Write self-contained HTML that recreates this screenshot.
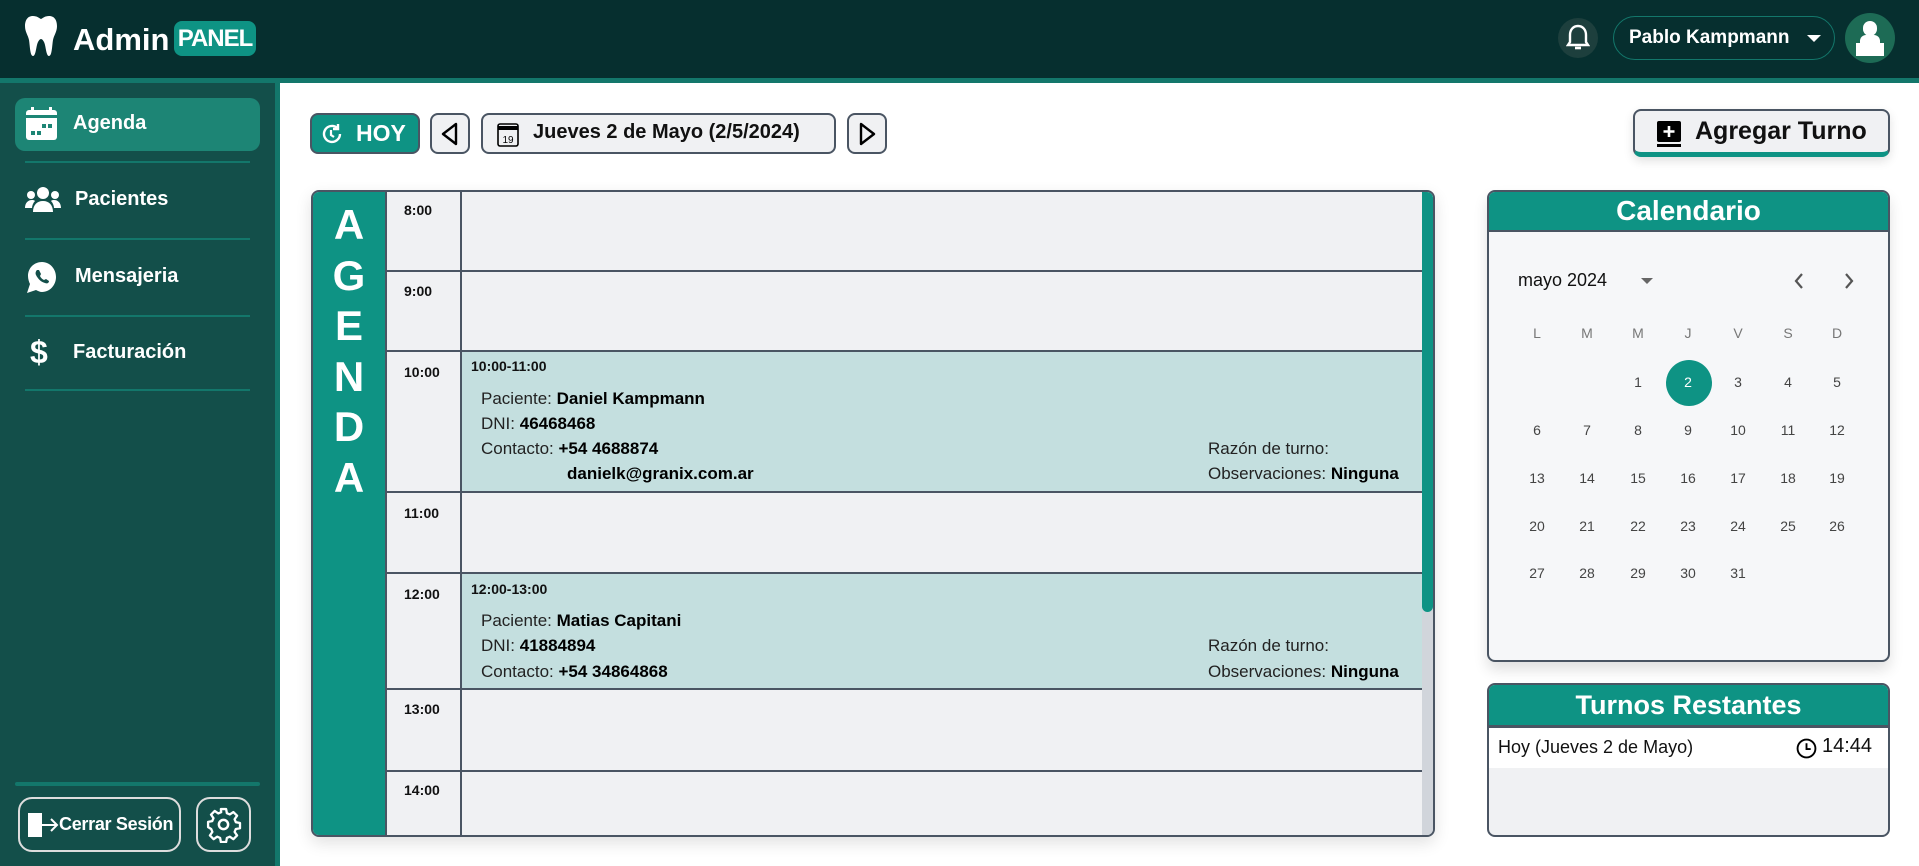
<!DOCTYPE html>
<html><head><meta charset="utf-8"><style>
*{box-sizing:border-box;margin:0;padding:0}
body{width:1919px;height:866px;overflow:hidden;background:#fff;font-family:"Liberation Sans",sans-serif;position:relative;color:#111}
.a{position:absolute}
#hdr{left:0;top:0;width:1919px;background:#062f2f;border-bottom:5px solid #13776b;height:83px}
#side{left:0;top:83px;width:280px;height:783px;background:#134f4a;border-right:5px solid #13776b}
.nav{color:#fff;font-weight:bold;font-size:20px}
.sep{height:2px;background:#13776b;left:25px;width:225px}
.btn{border:2px solid #4a5563;border-radius:8px;background:#f0f1f3}
.tl{font-size:14px;font-weight:bold;left:404px}
.hl{height:2px;background:#4a5563;left:387px;width:1035px}
.tx{font-size:17px;color:#222}
.tx b{color:#000;font-weight:bold}
.day{font-size:14px;color:#444;width:40px;text-align:center}
.dh{font-size:14px;color:#777;width:40px;text-align:center}
</style></head><body>
<div id="hdr" class="a"></div>
<svg class="a" style="left:24px;top:15px" width="34" height="42" viewBox="0 0 34 42"><path d="M9 1C3 1 1 6 1 11c0 6 3 9 4 14 1 6 1 16 4 16s3-10 5-14c1-2 2-3 3-3s2 1 3 3c2 4 2 14 5 14s3-10 4-16c1-5 4-8 4-14 0-5-2-10-8-10-4 0-6 2-8 3-2-1-4-3-8-3z" fill="#fff"/></svg>
<div class="a" style="left:73px;top:22px;color:#fff;font-size:31px;font-weight:bold">Admin</div>
<div class="a" style="left:174px;top:21px;width:82px;height:35px;background:#0e9384;border-radius:8px;color:#fff;font-size:24px;font-weight:bold;text-align:center;line-height:35px;letter-spacing:-1px">PANEL</div>
<div class="a" style="left:1558px;top:18px;width:40px;height:40px;border-radius:50%;background:#1d3f3d"></div>
<svg class="a" style="left:1566px;top:24px" width="24" height="28" viewBox="0 0 24 28"><path d="M12 2c-5 0-8 4-8 9v7l-2 3h20l-2-3v-7c0-5-3-9-8-9z" fill="none" stroke="#fff" stroke-width="2.4"/><path d="M9 24h6" stroke="#fff" stroke-width="2.6"/></svg>
<div class="a" style="left:1613px;top:16px;width:222px;height:44px;border:1.5px solid #13776b;border-radius:22px;color:#fff;font-size:19px;font-weight:bold;line-height:41px;padding-left:15px">Pablo Kampmann</div>
<div class="a" style="left:1807px;top:35px;border-left:7px solid transparent;border-right:7px solid transparent;border-top:7px solid #fff"></div>
<div class="a" style="left:1845px;top:13px;width:50px;height:50px;border-radius:50%;background:#1d6b55;overflow:hidden">
<div class="a" style="left:18px;top:8px;width:14px;height:15px;border-radius:7px;background:#fff"></div>
<div class="a" style="left:15px;top:22px;width:20px;height:10px;background:#fff;border-radius:6px 6px 0 0"></div>
<div class="a" style="left:11px;top:30px;width:28px;height:13px;background:#fff"></div></div>

<div id="side" class="a"></div>
<div class="a" style="left:15px;top:98px;width:245px;height:53px;background:#1d8575;border-radius:10px"></div>
<svg class="a" style="left:25px;top:107px" width="33" height="33" viewBox="0 0 33 33"><rect x="1" y="3" width="31" height="30" rx="3" fill="#fff"/><rect x="6" y="0" width="3" height="6" fill="#fff"/><rect x="24" y="0" width="3" height="6" fill="#fff"/><rect x="1" y="8" width="31" height="3" fill="#1d8575"/><rect x="17" y="17" width="4" height="4" fill="#1d8575"/><rect x="23" y="17" width="4" height="4" fill="#1d8575"/><rect x="6" y="24" width="4" height="4" fill="#1d8575"/><rect x="12" y="24" width="4" height="4" fill="#1d8575"/></svg>
<div class="a nav" style="left:73px;top:112px">Agenda</div>
<div class="a sep" style="top:161px"></div>
<svg class="a" style="left:25px;top:186px" width="36" height="26" viewBox="0 0 36 26"><circle cx="18" cy="7" r="6" fill="#fff"/><circle cx="6" cy="9" r="4" fill="#fff"/><circle cx="30" cy="9" r="4" fill="#fff"/><path d="M8 26c0-7 4-11 10-11s10 4 10 11z M0 22c0-5 3-8 7-8 1 0 2 0 3 1-2 2-3 5-3 7z M36 22c0-5-3-8-7-8-1 0-2 0-3 1 2 2 3 5 3 7z" fill="#fff"/></svg>
<div class="a nav" style="left:75px;top:188px">Pacientes</div>
<div class="a sep" style="top:238px"></div>
<svg class="a" style="left:26px;top:261px" width="32" height="33" viewBox="0 0 32 33"><path d="M16 1C8 1 2 7 2 15c0 3 1 6 2 8L1 32l9-3c2 1 4 2 6 2 8 0 14-7 14-15S24 1 16 1z" fill="#fff"/><path d="M11 9c-1 1-2 3-1 5 2 4 5 7 9 8 2 1 4 0 4-2l-3-2-2 1c-2-1-3-2-4-4l1-2-2-4z" fill="#134f4a"/></svg>
<div class="a nav" style="left:75px;top:265px">Mensajeria</div>
<div class="a sep" style="top:315px"></div>
<div class="a" style="left:30px;top:334px;color:#fff;font-size:32px;font-weight:bold">$</div>
<div class="a nav" style="left:73px;top:341px">Facturación</div>
<div class="a sep" style="top:389px"></div>
<div class="a" style="left:15px;top:782px;width:245px;height:4px;background:#13776b;border-radius:2px"></div>
<div class="a" style="left:18px;top:797px;width:163px;height:55px;border:2px solid #ddd;border-radius:14px"></div>
<div class="a" style="left:28px;top:813px;width:14px;height:24px;background:#fff"></div>
<svg class="a" style="left:38px;top:816px" width="22" height="18" viewBox="0 0 22 18"><path d="M2 9h17M13 3l6 6-6 6" stroke="#fff" stroke-width="2" fill="none"/></svg>
<div class="a" style="left:59px;top:814px;color:#fff;font-size:18px;font-weight:bold;letter-spacing:-0.3px">Cerrar Sesión</div>
<div class="a" style="left:196px;top:797px;width:55px;height:55px;border:2px solid #ddd;border-radius:14px"></div>
<svg class="a" style="left:205px;top:806px" width="37" height="37" viewBox="0 0 24 24"><path d="M10.3 2h3.4l.5 2.7 1.9.8 2.3-1.6 2.4 2.4-1.6 2.3.8 1.9 2.7.5v3.4l-2.7.5-.8 1.9 1.6 2.3-2.4 2.4-2.3-1.6-1.9.8-.5 2.7h-3.4l-.5-2.7-1.900-.8-2.3 1.6-2.4-2.4 1.6-2.3-.8-1.9L2 13.7v-3.4l2.7-.5.8-1.9-1.6-2.3 2.4-2.4 2.3 1.6 1.9-.8z" fill="none" stroke="#fff" stroke-width="1.5" stroke-linejoin="round"/><circle cx="12" cy="12" r="3" fill="none" stroke="#fff" stroke-width="1.6"/></svg>

<div class="a btn" style="left:310px;top:113px;width:110px;height:41px;background:#0e9384"></div>
<svg class="a" style="left:320px;top:122px" width="24" height="24" viewBox="0 0 24 24"><path d="M20 12a8 8 0 1 1-3-6.3" fill="none" stroke="#fff" stroke-width="2.4"/><path d="M18 2v5h-5" fill="none" stroke="#fff" stroke-width="2.4"/><path d="M11 8v5l3 2" stroke="#fff" stroke-width="2.2" fill="none"/></svg>
<div class="a" style="left:356px;top:120px;color:#fff;font-size:23px;font-weight:bold">HOY</div>
<div class="a btn" style="left:430px;top:113px;width:40px;height:41px"></div>
<svg class="a" style="left:439px;top:121px" width="22" height="26" viewBox="0 0 22 26"><path d="M17 3v20L4 13z" fill="none" stroke="#000" stroke-width="2.4" stroke-linejoin="round"/></svg>
<div class="a btn" style="left:481px;top:113px;width:355px;height:41px"></div>
<svg class="a" style="left:497px;top:121px" width="22" height="26" viewBox="0 0 22 26"><rect x="1" y="3" width="20" height="22" rx="2" fill="none" stroke="#000" stroke-width="1.6"/><rect x="1" y="5" width="20" height="4" fill="#000"/><text x="11" y="22" font-size="10" text-anchor="middle" font-family="Liberation Sans">19</text></svg>
<div class="a" style="left:533px;top:121px;font-size:20px;font-weight:bold;color:#111">Jueves 2 de Mayo (2/5/2024)</div>
<div class="a btn" style="left:847px;top:113px;width:40px;height:41px"></div>
<svg class="a" style="left:856px;top:121px" width="22" height="26" viewBox="0 0 22 26"><path d="M5 3v20l13-10z" fill="none" stroke="#000" stroke-width="2.4" stroke-linejoin="round"/></svg>
<div class="a btn" style="left:1633px;top:109px;width:257px;height:48px;border-bottom:5px solid #0e9384;box-shadow:0 4px 10px rgba(0,0,0,.12)"></div>
<svg class="a" style="left:1657px;top:121px" width="24" height="26" viewBox="0 0 24 26"><rect x="0" y="0" width="24" height="21" rx="2" fill="#000"/><rect x="0" y="23" width="24" height="3" fill="#000"/><path d="M12 5v11M6.5 10.5h11" stroke="#fff" stroke-width="2.6"/></svg>
<div class="a" style="left:1695px;top:117px;font-size:25px;font-weight:bold;color:#111">Agregar Turno</div>

<div class="a" style="left:311px;top:190px;width:1124px;height:647px;border:2px solid #4a5563;border-radius:8px;background:#f0f1f3;overflow:hidden;box-shadow:0 6px 16px rgba(0,0,0,.12)">
<div class="a" style="left:0;top:0;width:74px;height:647px;background:#0e9384;border-right:2px solid #4a5563"></div>
<div class="a" style="left:147px;top:0;width:2px;height:647px;background:#4a5563"></div>
<div class="a" style="left:149px;top:159px;width:960px;height:140px;background:#c4dfdf"></div>
<div class="a" style="left:149px;top:381px;width:960px;height:115px;background:#c4dfdf"></div>
<div class="a" style="left:1109px;top:0;width:13px;height:647px;background:#d1d5db"></div>
<div class="a" style="left:1109px;top:0;width:11px;height:420px;background:#0e9384;border-radius:0 0 6px 6px"></div>
</div>
<div class="a" style="left:313px;top:200px;width:72px;text-align:center;color:#fff;font-size:42px;font-weight:bold;line-height:50.5px">A<br>G<br>E<br>N<br>D<br>A</div>
<div class="a hl" style="top:270px"></div><div class="a hl" style="top:350px"></div><div class="a hl" style="top:491px"></div><div class="a hl" style="top:572px"></div><div class="a hl" style="top:688px"></div><div class="a hl" style="top:770px"></div>
<div class="a tl" style="top:202px">8:00</div>
<div class="a tl" style="top:283px">9:00</div>
<div class="a tl" style="top:364px">10:00</div>
<div class="a tl" style="top:505px">11:00</div>
<div class="a tl" style="top:586px">12:00</div>
<div class="a tl" style="top:701px">13:00</div>
<div class="a tl" style="top:782px">14:00</div>
<div class="a" style="left:471px;top:358px;font-size:14px;font-weight:bold">10:00-11:00</div>
<div class="a tx" style="left:481px;top:389px">Paciente: <b>Daniel Kampmann</b></div>
<div class="a tx" style="left:481px;top:414px">DNI: <b>46468468</b></div>
<div class="a tx" style="left:481px;top:439px">Contacto: <b>+54 4688874</b></div>
<div class="a tx" style="left:567px;top:464px"><b>danielk@granix.com.ar</b></div>
<div class="a tx" style="left:1208px;top:439px">Razón de turno:</div>
<div class="a tx" style="left:1208px;top:464px">Observaciones: <b>Ninguna</b></div>
<div class="a" style="left:471px;top:581px;font-size:14px;font-weight:bold">12:00-13:00</div>
<div class="a tx" style="left:481px;top:611px">Paciente: <b>Matias Capitani</b></div>
<div class="a tx" style="left:481px;top:636px">DNI: <b>41884894</b></div>
<div class="a tx" style="left:481px;top:662px">Contacto: <b>+54 34864868</b></div>
<div class="a tx" style="left:1208px;top:636px">Razón de turno:</div>
<div class="a tx" style="left:1208px;top:662px">Observaciones: <b>Ninguna</b></div>

<div class="a" style="left:1487px;top:190px;width:403px;height:472px;border:2px solid #4a5563;border-radius:8px;background:#f6f7f9;overflow:hidden;box-shadow:0 8px 14px rgba(0,0,0,.12)">
<div style="height:40px;background:#0e9384;border-bottom:2px solid #4a5563;color:#fff;font-size:28px;font-weight:bold;text-align:center;line-height:38px">Calendario</div></div>
<div class="a" style="left:1518px;top:270px;font-size:18px;color:#111">mayo 2024</div>
<div class="a" style="left:1641px;top:278px;border-left:6px solid transparent;border-right:6px solid transparent;border-top:6px solid #666"></div>
<svg class="a" style="left:1790px;top:272px" width="70" height="18" viewBox="0 0 70 18"><path d="M12 2l-6 7 6 7M56 2l6 7-6 7" fill="none" stroke="#555" stroke-width="2.2"/></svg>
<div class="a" style="left:1666px;top:360px;width:46px;height:46px;border-radius:50%;background:#0e9384"></div>
<div class="a dh" style="left:1517px;top:325px">L</div><div class="a dh" style="left:1567px;top:325px">M</div><div class="a dh" style="left:1618px;top:325px">M</div><div class="a dh" style="left:1668px;top:325px">J</div><div class="a dh" style="left:1718px;top:325px">V</div><div class="a dh" style="left:1768px;top:325px">S</div><div class="a dh" style="left:1817px;top:325px">D</div>
<div class="a day" style="left:1618px;top:374px">1</div><div class="a day" style="left:1668px;top:374px;color:#fff">2</div><div class="a day" style="left:1718px;top:374px">3</div><div class="a day" style="left:1768px;top:374px">4</div><div class="a day" style="left:1817px;top:374px">5</div>
<div class="a day" style="left:1517px;top:422px">6</div><div class="a day" style="left:1567px;top:422px">7</div><div class="a day" style="left:1618px;top:422px">8</div><div class="a day" style="left:1668px;top:422px">9</div><div class="a day" style="left:1718px;top:422px">10</div><div class="a day" style="left:1768px;top:422px">11</div><div class="a day" style="left:1817px;top:422px">12</div>
<div class="a day" style="left:1517px;top:470px">13</div><div class="a day" style="left:1567px;top:470px">14</div><div class="a day" style="left:1618px;top:470px">15</div><div class="a day" style="left:1668px;top:470px">16</div><div class="a day" style="left:1718px;top:470px">17</div><div class="a day" style="left:1768px;top:470px">18</div><div class="a day" style="left:1817px;top:470px">19</div>
<div class="a day" style="left:1517px;top:518px">20</div><div class="a day" style="left:1567px;top:518px">21</div><div class="a day" style="left:1618px;top:518px">22</div><div class="a day" style="left:1668px;top:518px">23</div><div class="a day" style="left:1718px;top:518px">24</div><div class="a day" style="left:1768px;top:518px">25</div><div class="a day" style="left:1817px;top:518px">26</div>
<div class="a day" style="left:1517px;top:565px">27</div><div class="a day" style="left:1567px;top:565px">28</div><div class="a day" style="left:1618px;top:565px">29</div><div class="a day" style="left:1668px;top:565px">30</div><div class="a day" style="left:1718px;top:565px">31</div>

<div class="a" style="left:1487px;top:683px;width:403px;height:154px;border:2px solid #4a5563;border-radius:8px;background:#f0f1f3;overflow:hidden">
<div style="height:43px;background:#0e9384;border-bottom:3px solid #4a5563;color:#fff;font-size:27px;font-weight:bold;text-align:center;line-height:40px">Turnos Restantes</div>
<div style="height:40px;background:#fff;position:relative">
<div class="a" style="left:9px;top:9px;font-size:18px">Hoy (Jueves 2 de Mayo)</div>
<svg class="a" style="left:307px;top:10px" width="21" height="21" viewBox="0 0 20 20"><circle cx="10" cy="10" r="8.5" fill="none" stroke="#000" stroke-width="1.8"/><path d="M10 5v5.5h4" fill="none" stroke="#000" stroke-width="1.8"/></svg>
<div class="a" style="left:333px;top:7px;font-size:20px">14:44</div></div></div>
</body></html>
